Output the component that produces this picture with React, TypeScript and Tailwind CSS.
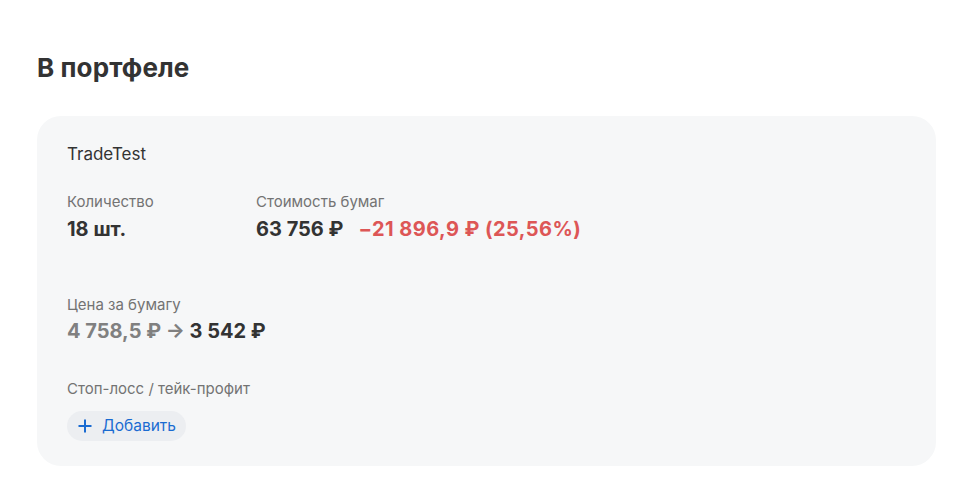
import React from "react";

export default function App() {
  return (
    <div className="w-[964px] h-[488px] bg-white" style={{ fontFamily: "Inter, 'Noto Sans', sans-serif" }}>
      <div className="pl-[37px] pr-[28px] pt-[52px]">
        <h1 className="text-[26px] leading-[32px] font-bold text-[#333333] tracking-[0.1px]">В портфеле</h1>
        <div className="mt-[32px] h-[350px] rounded-[24px] bg-[#f6f7f8] px-[30px] pt-[26px]">
          <div className="text-[17px] leading-[24px] text-[#333333]">TradeTest</div>
          <div className="mt-[26px] flex">
            <div className="w-[189px]">
              <div className="text-[15px] leading-[20px] text-[#737373]">Количество</div>
              <div className="mt-[3px] text-[20px] leading-[28px] font-bold text-[#333333]">18 шт.</div>
            </div>
            <div>
              <div className="text-[15px] leading-[20px] text-[#737373]">Стоимость бумаг</div>
              <div className="mt-[3px] text-[20px] leading-[28px] font-bold text-[#333333]">
                63 756 ₽<span className="ml-[15px] text-[#dd5656] tracking-[0.45px]">−21 896,9 ₽ (25,56%)</span>
              </div>
            </div>
          </div>
          <div className="mt-[52px]">
            <div className="text-[15px] leading-[20px] text-[#737373]">Цена за бумагу</div>
            <div className="mt-[2px] text-[20px] leading-[28px] font-bold text-[#333333]">
              <span className="text-[#808080]">4 758,5 ₽ →</span> 3 542 ₽
            </div>
          </div>
          <div className="mt-[34px]">
            <div className="text-[15px] leading-[20px] text-[#737373]">Стоп-лосс / тейк-профит</div>
            <button className="mt-[12px] flex h-[30px] items-center gap-[9px] rounded-full bg-[#eceef1] pl-[10px] pr-[10px] text-[15.5px] text-[#1a6bd1]">
              <svg width="16" height="16" viewBox="0 0 16 16">
                <path d="M8 1.5v13M1.5 8h13" stroke="#1a6bd1" strokeWidth="2" strokeLinecap="butt" />
              </svg>
              Добавить
            </button>
          </div>
        </div>
      </div>
    </div>
  );
}
